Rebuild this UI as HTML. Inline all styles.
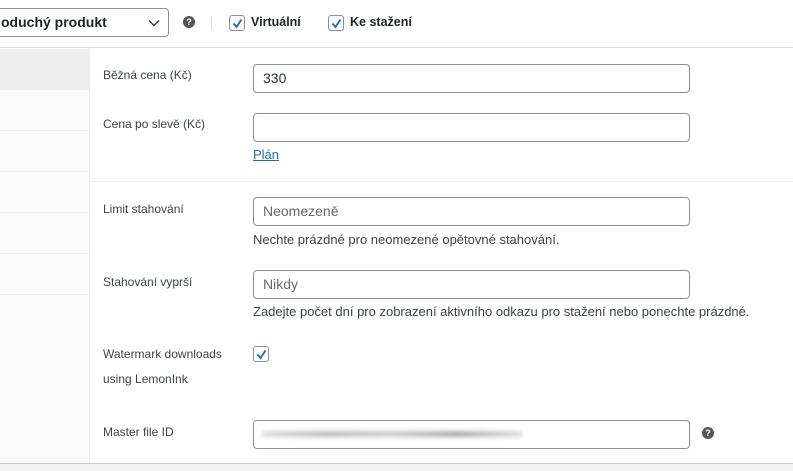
<!DOCTYPE html>
<html><head><meta charset="utf-8"><style>
*{box-sizing:border-box;margin:0;padding:0}
body{width:793px;height:471px;overflow:hidden;background:#fff;font-family:"Liberation Sans",sans-serif;color:#3c434a;position:relative}
.abs{position:absolute}
.sel{left:-10px;top:8px;width:179px;height:29px;border:1px solid #8c8f94;border-radius:4px;font-size:14px;font-weight:bold;color:#1d2327;padding:5px 0 0 10px}
.sel svg{position:absolute;right:8px;top:10px}
.help{width:12px;height:12px;border-radius:50%;background:#555;color:#fff;font-size:9px;font-weight:bold;text-align:center;line-height:12px}
.cb{width:16px;height:16px;border:1px solid #8c8f94;border-radius:3px;background:#fff}
.cb svg{position:absolute;left:1px;top:1px}
.lbl{font-size:12.5px;font-weight:bold;color:#1d2327}
.side{left:0;top:48px;width:90px;height:415px;background:#fafafa;border-right:1px solid #eee}
.side div{position:absolute;left:0;width:90px;height:1px;background:#eee}
.fl{font-size:12px;color:#3c434a;left:103px}
.in{left:253px;width:437px;height:29px;border:1px solid #8c8f94;border-radius:4px;font-size:14px;padding:5px 0 0 9px;color:#2c3338}
.ph{color:#646970}
.desc{left:253px;font-size:13px;color:#3c434a}
</style></head><body>
<div class="abs sel">oduchý produkt<svg width="12" height="8" viewBox="0 0 12 8"><path d="M1 1.5l5 5 5-5" fill="none" stroke="#3c434a" stroke-width="1.5"/></svg></div>
<div class="abs help" style="left:183px;top:16px">?</div>
<div class="abs" style="left:211px;top:16px;width:1px;height:14px;background:#ddd"></div>
<div class="abs cb" style="left:229px;top:15px"><svg width="13" height="13" viewBox="0 0 13 13"><path d="M2.5 6.5l3 3.5 5-7.5" fill="none" stroke="#2271b1" stroke-width="2"/></svg></div>
<div class="abs lbl" style="left:251px;top:15px">Virtuální</div>
<div class="abs cb" style="left:328px;top:15px"><svg width="13" height="13" viewBox="0 0 13 13"><path d="M2.5 6.5l3 3.5 5-7.5" fill="none" stroke="#2271b1" stroke-width="2"/></svg></div>
<div class="abs lbl" style="left:350px;top:15px">Ke stažení</div>
<div class="abs" style="left:0;top:47px;width:793px;height:1px;background:#ddd"></div>
<div class="abs side"><span style="position:absolute;left:0;top:1px;width:90px;height:41px;background:#eee"></span><div style="top:82px"></div><div style="top:123px"></div><div style="top:164px"></div><div style="top:205px"></div><div style="top:246px"></div></div>

<div class="abs fl" style="top:68px">Běžná cena (Kč)</div>
<div class="abs in" style="top:64px">330</div>
<div class="abs fl" style="top:117px">Cena po slevě (Kč)</div>
<div class="abs in" style="top:113px"></div>
<div class="abs" style="left:253px;top:147px;font-size:13px;color:#2271b1;text-decoration:underline">Plán</div>
<div class="abs" style="left:91px;top:181px;width:702px;height:1px;background:#eee"></div>
<div class="abs fl" style="top:202px">Limit stahování</div>
<div class="abs in ph" style="top:197px">Neomezeně</div>
<div class="abs desc" style="top:232px">Nechte prázdné pro neomezené opětovné stahování.</div>
<div class="abs fl" style="top:275px">Stahování vyprší</div>
<div class="abs in ph" style="top:270px">Nikdy</div>
<div class="abs desc" style="top:304px">Zadejte počet dní pro zobrazení aktivního odkazu pro stažení nebo ponechte prázdné.</div>
<div class="abs fl" style="top:347px">Watermark downloads</div>
<div class="abs fl" style="top:372px">using LemonInk</div>
<div class="abs cb" style="left:253px;top:346px"><svg width="13" height="13" viewBox="0 0 13 13"><path d="M2.5 6.5l3 3.5 5-7.5" fill="none" stroke="#2271b1" stroke-width="2"/></svg></div>
<div class="abs fl" style="top:425px">Master file ID</div>
<div class="abs in" style="top:420px"><div style="position:absolute;left:8px;top:10px;width:260px;height:6px;background:linear-gradient(90deg,#ddd,#bbb,#ccc,#aaa,#ddd);filter:blur(2px)"></div></div>
<div class="abs help" style="left:702px;top:427px">?</div>
<div class="abs" style="left:0;top:463px;width:793px;height:8px;background:#f0f0f1;border-top:1px solid #ccc"></div>
</body></html>
